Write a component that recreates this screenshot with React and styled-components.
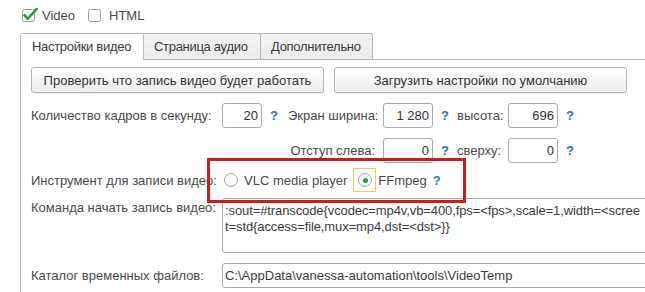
import React from "react";
import styled, { createGlobalStyle } from "styled-components";

const GlobalStyle = createGlobalStyle`
  html, body {
    margin: 0;
    padding: 0;
    overflow: hidden;
    background: #ffffff;
  }
  body {
    font-family: "Liberation Sans", Arial, sans-serif;
    font-size: 13px;
    color: #4a4a4a;
  }
`;

const Page = styled.div`
  position: relative;
  width: 645px;
  height: 292px;
  padding: 7px 0 0 20px;
  box-sizing: border-box;
  overflow: hidden;
`;

const CheckRow = styled.div`
  display: flex;
  align-items: center;
  height: 16px;
  padding-left: 2px;
  gap: 13px;
`;

const CheckItem = styled.label`
  display: flex;
  align-items: center;
  gap: ${(p) => (p.$checked ? "4px" : "5px")};
  color: #4a4a4a;
`;

const TabBar = styled.div`
  display: flex;
  align-items: flex-end;
  margin-top: 10px;
  width: 625px;
`;

const Tab = styled.div`
  width: ${(p) => p.$w}px;
  flex: none;
  height: 27px;
  box-sizing: border-box;
  padding: 0 0 0 ${(p) => p.$pad}px;
  display: flex;
  align-items: center;
  color: #3a3a3a;
  letter-spacing: -0.3px;
  border: 1px solid #b7b7b7;
  border-bottom: ${(p) => (p.$active ? "1px solid #ffffff" : "1px solid #b7b7b7")};
  border-radius: 2px 2px 0 0;
  background: ${(p) => (p.$active ? "#ffffff" : "linear-gradient(#f4f4f4, #ebebeb)")};
  margin-left: ${(p) => (p.$first ? "0" : "-1px")};
  white-space: nowrap;
  overflow: hidden;
`;

const TabFill = styled.div`
  flex: 1;
  border-bottom: 1px solid #b7b7b7;
`;

const Panel = styled.div`
  border-left: 1px solid #b7b7b7;
  width: 625px;
  box-sizing: border-box;
  padding: 7px 0 0 10px;
  height: 240px;
`;

const ButtonRow = styled.div`
  display: flex;
  gap: 10px;
`;

const Button = styled.button`
  width: 293px;
  height: 26px;
  box-sizing: border-box;
  border: 1px solid #b5b5b5;
  border-radius: 3px;
  background: linear-gradient(#ffffff, #eeeeee);
  box-shadow: 0 1px 1px rgba(0, 0, 0, 0.08);
  font-family: inherit;
  font-size: 13px;
  color: #333333;
  padding: 0;
  cursor: pointer;
`;

const FieldGrid = styled.div`
  display: grid;
  grid-template-columns: 191px 40px 26px 95px 50px 24px 51px 50px auto;
  grid-auto-rows: 25px;
  row-gap: 10px;
  align-items: center;
  margin-top: 10px;
`;

const Label = styled.div`
  grid-column: ${(p) => p.$col || "auto"};
  text-align: ${(p) => (p.$right ? "right" : "left")};
  padding-right: ${(p) => (p.$right ? "8px" : "0")};
  white-space: nowrap;
  color: #4a4a4a;
`;

const NumInput = styled.div`
  height: 25px;
  box-sizing: border-box;
  border: 1px solid #ababab;
  border-radius: 3px;
  background: #ffffff;
  display: flex;
  align-items: center;
  justify-content: flex-end;
  padding-right: 3px;
  color: #333333;
`;

const Help = styled.span`
  padding-left: ${(p) => (p.$flush ? "0" : "8px")};
  color: #2378bd;
  font-weight: bold;
  font-size: 13px;
`;

const FormRow = styled.div`
  display: flex;
  align-items: ${(p) => (p.$top ? "flex-start" : "center")};
  margin-top: ${(p) => p.$mt}px;
  height: ${(p) => p.$h}px;
`;

const RowLabel = styled.div`
  width: 191px;
  flex: none;
  padding-top: ${(p) => (p.$top ? "2px" : "0")};
  white-space: nowrap;
  color: #4a4a4a;
`;

const RadioGroup = styled.div`
  display: flex;
  align-items: center;
`;

const RadioOption = styled.div`
  display: flex;
  align-items: center;
  padding: ${(p) => (p.$focused ? "4px 3px 4px 4px" : "0 0 0 1px")};
  border: 1px solid ${(p) => (p.$focused ? "#e3d060" : "transparent")};
  margin-right: ${(p) => (p.$focused ? "2px" : "5px")};
`;

const RadioCircle = styled.span`
  width: 14px;
  height: 14px;
  box-sizing: border-box;
  border: 1px solid #a3a3a3;
  border-radius: 50%;
  background: radial-gradient(circle at 50% 40%, #ffffff 55%, #ededed 100%);
  display: flex;
  align-items: center;
  justify-content: center;
  &::after {
    content: "";
    width: 5px;
    height: 5px;
    border-radius: 50%;
    background: ${(p) => (p.$checked ? "#1f9a47" : "transparent")};
  }
`;

const RadioText = styled.span`
  margin-right: ${(p) => p.$mr}px;
  white-space: nowrap;
  color: #4a4a4a;
`;

const TextBox = styled.div`
  width: 440px;
  flex: none;
  height: ${(p) => p.$h}px;
  box-sizing: border-box;
  border: 1px solid #ababab;
  border-radius: 3px;
  background: #ffffff;
  padding: ${(p) => (p.$multi ? "4px 0 0 2px" : "0 0 0 2px")};
  display: ${(p) => (p.$multi ? "block" : "flex")};
  align-items: center;
  color: #3c3c3c;
  line-height: 16px;
  letter-spacing: ${(p) => (p.$multi ? "-0.1px" : "0")};
  white-space: pre;
  overflow: hidden;
`;

const RedFrame = styled.div`
  position: absolute;
  left: 207px;
  top: 158px;
  width: 259px;
  height: 45px;
  box-sizing: border-box;
  border: 3px solid #cf1b1b;
  pointer-events: none;
`;

function CheckBoxIcon({ checked }) {
  return (
    <svg width="16" height="15" viewBox="0 0 16 15">
      <rect x="0.5" y="1.5" width="12" height="12" rx="2" fill="#ffffff" stroke="#9d9d9d" />
      {checked && (
        <path d="M2.5 7.2 L5.6 10.8 L14.8 0.8" fill="none" stroke="#2f9a45" strokeWidth="2.6" strokeLinecap="round" strokeLinejoin="round" />
      )}
    </svg>
  );
}

export default function App() {
  return (
    <>
      <GlobalStyle />
      <Page>
        <CheckRow>
          <CheckItem $checked>
            <CheckBoxIcon checked />
            Video
          </CheckItem>
          <CheckItem>
            <CheckBoxIcon />
            HTML
          </CheckItem>
        </CheckRow>

        <TabBar>
          <Tab $active $first $w={124} $pad={11}>Настройки видео</Tab>
          <Tab $w={118} $pad={10}>Страница аудио</Tab>
          <Tab $w={113} $pad={10}>Дополнительно</Tab>
          <TabFill />
        </TabBar>

        <Panel>
          <ButtonRow>
            <Button>Проверить что запись видео будет работать</Button>
            <Button>Загрузить настройки по умолчанию</Button>
          </ButtonRow>

          <FieldGrid>
            <Label>Количество кадров в секунду:</Label>
            <NumInput>20</NumInput>
            <Help>?</Help>
            <Label $right>Экран ширина:</Label>
            <NumInput>1 280</NumInput>
            <Help>?</Help>
            <Label>высота:</Label>
            <NumInput>696</NumInput>
            <Help>?</Help>

            <Label $col="1 / 5" $right>Отступ слева:</Label>
            <NumInput>0</NumInput>
            <Help>?</Help>
            <Label>сверху:</Label>
            <NumInput>0</NumInput>
            <Help>?</Help>
          </FieldGrid>

          <FormRow $mt={5} $h={24}>
            <RowLabel>Инструмент для записи видео:</RowLabel>
            <RadioGroup>
              <RadioOption>
                <RadioCircle />
              </RadioOption>
              <RadioText $mr={6}>VLC media player</RadioText>
              <RadioOption $focused>
                <RadioCircle $checked />
              </RadioOption>
              <RadioText $mr={6}>FFmpeg</RadioText>
              <Help $flush>?</Help>
            </RadioGroup>
          </FormRow>

          <FormRow $top $mt={6} $h={55}>
            <RowLabel $top>Команда начать запись видео:</RowLabel>
            <TextBox $multi $h={55}>
              {":sout=#transcode{vcodec=mp4v,vb=400,fps=<fps>,scale=1,width=<scree\nt=std{access=file,mux=mp4,dst=<dst>}}"}
            </TextBox>
          </FormRow>

          <FormRow $mt={10} $h={25}>
            <RowLabel>Каталог временных файлов:</RowLabel>
            <TextBox $h={25}>{"C:\\AppData\\vanessa-automation\\tools\\VideoTemp"}</TextBox>
          </FormRow>
        </Panel>

        <RedFrame />
      </Page>
    </>
  );
}
